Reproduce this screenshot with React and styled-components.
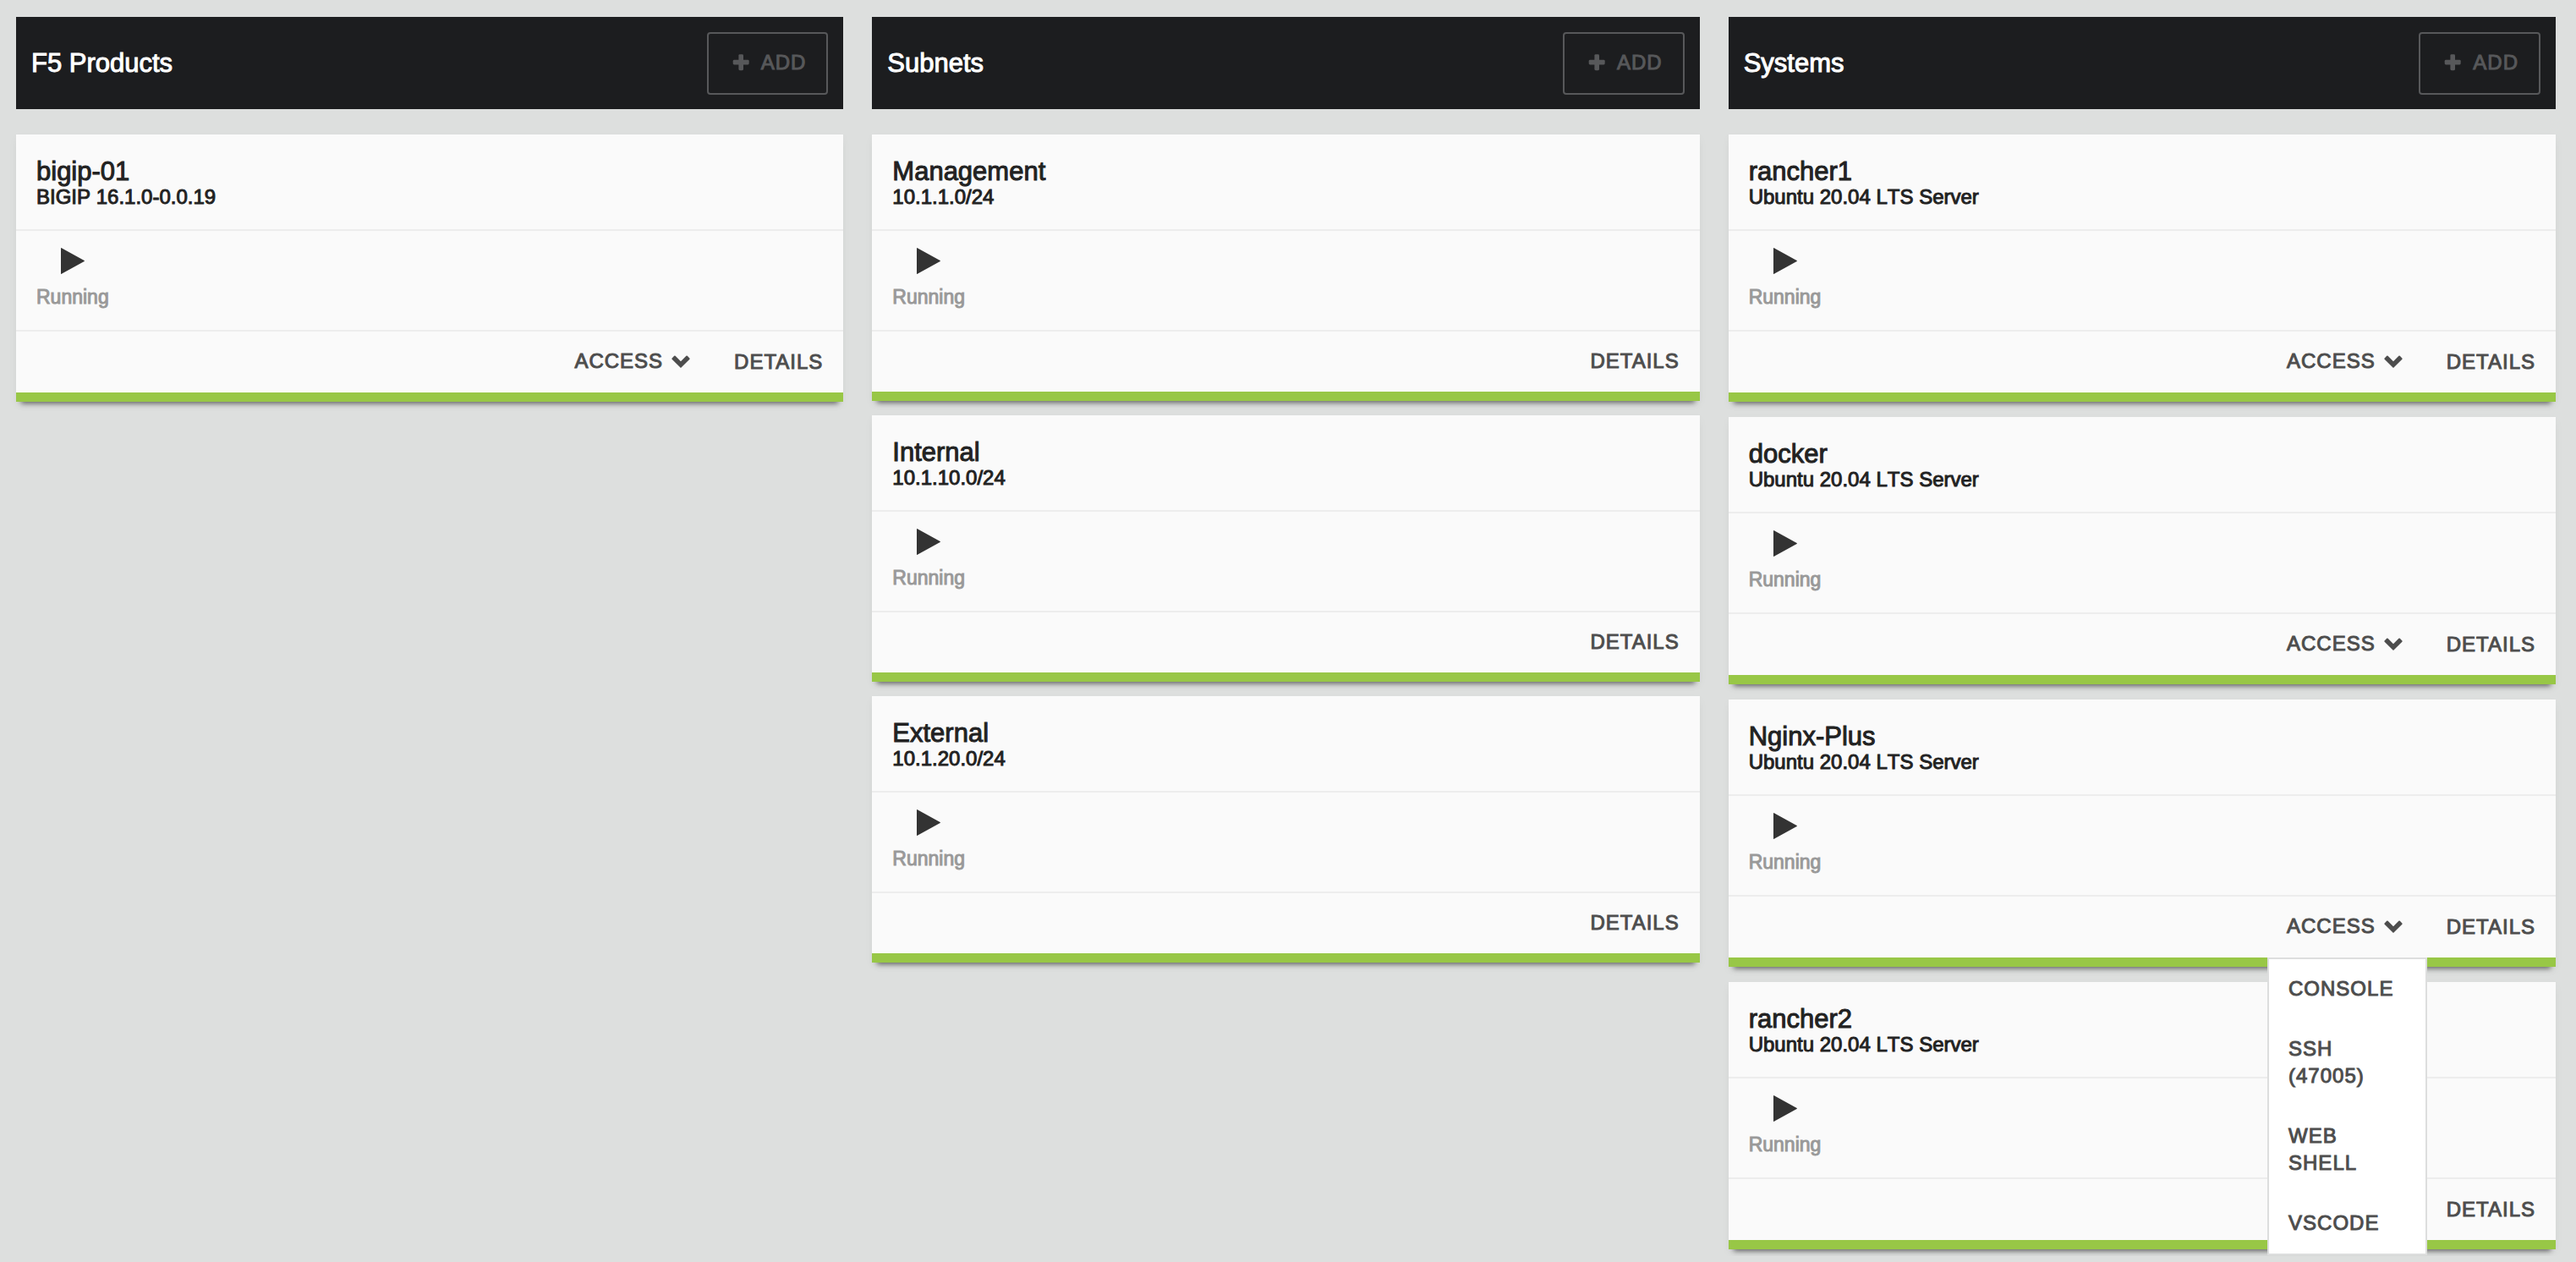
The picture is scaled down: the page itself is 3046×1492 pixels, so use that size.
import React from 'react';
import styled, { createGlobalStyle, css } from 'styled-components';

const GlobalStyle = createGlobalStyle`
  *, *::before, *::after { box-sizing: border-box; }
  body {
    margin: 0;
    background: #dddfde;
    color: #222;
    font-family: "Liberation Sans", Arial, sans-serif;
    font-kerning: none;
    -webkit-text-stroke: 1px currentColor;
  }
`;

const Board = styled.main`
  display: grid;
  grid-template-columns: repeat(3, minmax(0, 1fr));
  align-items: start;
  gap: 34px;
  padding: 20px 24px 8px 19px;
`;

const Column = styled.section`
  display: flex;
  flex-direction: column;
`;

const ColumnHeader = styled.header`
  display: flex;
  align-items: center;
  justify-content: space-between;
  margin-bottom: 30px;
  padding: 18px 18px 17px;
  background: #1c1d1f;
`;

const ColumnTitle = styled.h2`
  margin: 0;
  color: #fff;
  font-size: 31px;
  font-weight: 400;
  line-height: 36px;
`;

const buttonText = css`
  border: 0;
  background: none;
  font-family: inherit;
  font-size: 24px;
  line-height: 32px;
  letter-spacing: 1px;
  text-transform: uppercase;
`;

const AddButton = styled.button`
  ${buttonText}
  display: flex;
  align-items: center;
  gap: 10px;
  padding: 18px 24px 20px;
  border: 2px solid #57585a;
  border-radius: 4px;
  color: #57585a;
`;

const CardList = styled.div`
  display: flex;
  flex-direction: column;
  gap: ${({ $gap }) => $gap}px;
`;

const Card = styled.article`
  border-bottom: 11px solid #98c746;
  background: #fafafa;
  box-shadow: 0 8px 6px -6px rgba(0, 0, 0, 0.55), 0 4px 10px rgba(0, 0, 0, 0.04);
`;

const CardHeading = styled.div`
  padding: 28px 24px 24px;
  border-bottom: 2px solid #ededed;
`;

const Name = styled.h3`
  margin: 0;
  font-size: 31px;
  font-weight: 400;
  line-height: 32px;
`;

const Description = styled.p`
  margin: 0;
  font-size: 24px;
  line-height: 28px;
`;

const CardStatus = styled.div`
  display: flex;
  padding: 20px 24px 26px;
  border-bottom: 2px solid #ededed;
`;

const Status = styled.div`
  display: flex;
  flex-direction: column;
  align-items: center;
  gap: 14px;
  color: #999;
  font-size: 23px;
  line-height: 26px;
`;

const CardActions = styled.footer`
  display: flex;
  align-items: flex-end;
  justify-content: flex-end;
  min-height: ${({ $height }) => $height}px;
`;

const DetailsButton = styled.button`
  ${buttonText}
  padding: 19px 24px 20px 23px;
  color: #4d4d4d;
`;

const Dropdown = styled.div`
  position: relative;
`;

const AccessButton = styled.button`
  ${buttonText}
  display: flex;
  align-items: center;
  gap: 4px;
  padding: 19px 23px 21px;
  color: #4d4d4d;
`;

const Menu = styled.div`
  position: absolute;
  z-index: 1;
  top: 100%;
  left: 0;
  display: flex;
  flex-direction: column;
  gap: 1px;
  width: 100%;
  padding-bottom: 1px;
  border: 2px solid #dddede;
  background: #fff;
`;

const MenuItem = styled.button`
  ${buttonText}
  padding: 19px 23px;
  color: #4d4d4d;
  text-align: left;
`;

const PlusIcon = () => (
  <svg width="28" height="20" viewBox="0 0 28 20" fill="currentColor" aria-hidden="true">
    <rect x="4.7" y="6.8" width="19" height="5.6" rx="1.4" />
    <rect x="11.4" y="0.2" width="5.6" height="19" rx="1.4" />
  </svg>
);

const ChevronIcon = () => (
  <svg width="34" height="16" viewBox="0 0 34 16" fill="currentColor" aria-hidden="true">
    <path d="M17 16 6.6 5.8 Q6 5.1 6.6 4.4 L9.2 1.8 Q9.9 1.2 10.6 1.8 L17 8.2 23.4 1.8 Q24.1 1.2 24.8 1.8 L27.4 4.4 Q28 5.1 27.4 5.8Z" />
  </svg>
);

const PlayIcon = () => (
  <svg width="28" height="31" viewBox="0 0 28 31" fill="#333" aria-hidden="true">
    <path d="M0 .6Q0-.2.8.3L27.6 15Q28.3 15.5 27.6 16L.8 30.7Q0 31.2 0 30.4Z" />
  </svg>
);

const accessTargets = ['Console', 'SSH (47005)', 'Web Shell', 'VSCode'];

const columns = [
  {
    title: 'F5 Products',
    gap: 18,
    actionsHeight: 72,
    cards: [{ name: 'bigip-01', description: 'BIGIP 16.1.0-0.0.19', access: true }],
  },
  {
    title: 'Subnets',
    gap: 17,
    actionsHeight: 71,
    cards: [
      { name: 'Management', description: '10.1.1.0/24' },
      { name: 'Internal', description: '10.1.10.0/24' },
      { name: 'External', description: '10.1.20.0/24' },
    ],
  },
  {
    title: 'Systems',
    gap: 18,
    actionsHeight: 72,
    cards: [
      { name: 'rancher1', description: 'Ubuntu 20.04 LTS Server', access: true },
      { name: 'docker', description: 'Ubuntu 20.04 LTS Server', access: true },
      { name: 'Nginx-Plus', description: 'Ubuntu 20.04 LTS Server', access: true },
      { name: 'rancher2', description: 'Ubuntu 20.04 LTS Server' },
    ],
  },
];

function AccessMenu({ open, onToggle }) {
  return (
    <Dropdown>
      <AccessButton type="button" aria-haspopup="menu" aria-expanded={open} onClick={onToggle}>
        Access
        <ChevronIcon />
      </AccessButton>
      {open && (
        <Menu role="menu">
          {accessTargets.map((target) => (
            <MenuItem key={target} type="button" role="menuitem">
              {target}
            </MenuItem>
          ))}
        </Menu>
      )}
    </Dropdown>
  );
}

export default function App() {
  const [openCard, setOpenCard] = React.useState('Nginx-Plus');
  const toggle = (name) => setOpenCard((current) => (current === name ? null : name));

  return (
    <>
      <GlobalStyle />
      <Board>
        {columns.map(({ title, gap, actionsHeight, cards }) => (
          <Column key={title}>
            <ColumnHeader>
              <ColumnTitle>{title}</ColumnTitle>
              <AddButton type="button" disabled>
                <PlusIcon />
                Add
              </AddButton>
            </ColumnHeader>
            <CardList $gap={gap}>
              {cards.map(({ name, description, access }) => (
                <Card key={name}>
                  <CardHeading>
                    <Name>{name}</Name>
                    <Description>{description}</Description>
                  </CardHeading>
                  <CardStatus>
                    <Status>
                      <PlayIcon />
                      Running
                    </Status>
                  </CardStatus>
                  <CardActions $height={actionsHeight}>
                    {access && <AccessMenu open={openCard === name} onToggle={() => toggle(name)} />}
                    <DetailsButton type="button">Details</DetailsButton>
                  </CardActions>
                </Card>
              ))}
            </CardList>
          </Column>
        ))}
      </Board>
    </>
  );
}
